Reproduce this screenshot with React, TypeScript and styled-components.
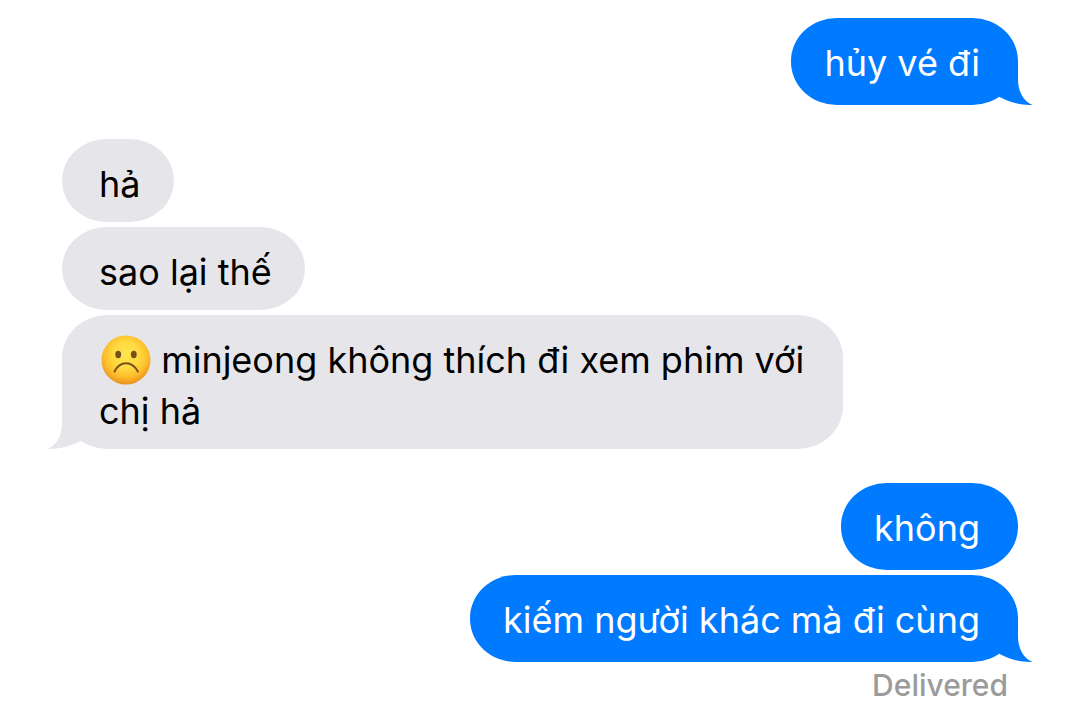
import React from "react";
import styled, { createGlobalStyle, css } from "styled-components";

const GlobalStyle = createGlobalStyle`
  *, *::before, *::after {
    box-sizing: border-box;
  }

  body {
    margin: 0;
    background: #ffffff;
    font-family: Inter, "Noto Sans", sans-serif;
  }
`;

type Side = "sent" | "received";

const Conversation = styled.main`
  display: flex;
  flex-direction: column;
  gap: 34px;
  padding: 18px 62px 24px;
`;

const Group = styled.section<{ $side: Side }>`
  display: flex;
  flex-direction: column;
  align-items: ${({ $side }) => ($side === "sent" ? "flex-end" : "flex-start")};
  gap: 5px;
`;

const sentBubble = css`
  padding: 20px 38px 16px 33px;
  background: #007aff;
  color: #ffffff;
`;

const receivedBubble = css`
  padding: 20px 33px 12px 37px;
  background: #e5e5ea;
  color: #000000;
`;

const Bubble = styled.p<{ $side: Side }>`
  position: relative;
  margin: 0;
  max-width: 81.7%;
  border-radius: 46px / 43px;
  font-size: 36px;
  line-height: 51px;
  ${({ $side }) => ($side === "sent" ? sentBubble : receivedBubble)}
`;

const TailShape = styled.svg<{ $side: Side }>`
  position: absolute;
  bottom: 0;
  ${({ $side }) =>
    $side === "sent"
      ? css`
          right: -16px;
          fill: #007aff;
        `
      : css`
          left: -16px;
          fill: #e5e5ea;
          transform: scaleX(-1);
        `}
`;

const EmojiImage = styled.svg`
  display: inline-block;
  margin-left: 2px;
  vertical-align: -12px;
`;

const Status = styled.span`
  padding-right: 10px;
  color: #9b9b9b;
  font-size: 30px;
  font-weight: 500;
  line-height: 36px;
`;

function Tail({ side }: { side: Side }) {
  return (
    <TailShape $side={side} width="44" height="45" viewBox="0 0 44 45" aria-hidden="true">
      <path d="M28 0V19C28 31 33 41 42.500 45C30 45.200 19 42 9.500 37L0 20V0Z" />
    </TailShape>
  );
}

function FrowningFace() {
  return (
    <EmojiImage width="50" height="50" viewBox="0 0 50 50" role="img" aria-label="frowning face">
      <defs>
        <radialGradient id="face" cx="50%" cy="40%" r="60%">
          <stop offset="0" stopColor="#ffe650" />
          <stop offset="0.45" stopColor="#ffd93f" />
          <stop offset="0.75" stopColor="#fdbd2c" />
          <stop offset="1" stopColor="#ea8f1c" />
        </radialGradient>
      </defs>
      <circle cx="25" cy="25" r="24.500" fill="url(#face)" />
      <ellipse cx="17.200" cy="19.500" rx="2.900" ry="3.700" fill="#75501a" />
      <ellipse cx="32.800" cy="19.500" rx="2.900" ry="3.700" fill="#75501a" />
      <path
        d="M13.500 36.500C19 25.500 31 25.500 36.800 36.500"
        fill="none"
        stroke="#75501a"
        strokeWidth="2"
        strokeLinecap="round"
      />
    </EmojiImage>
  );
}

interface MessageProps {
  side: Side;
  tail?: boolean;
  children: React.ReactNode;
}

function Message({ side, tail = false, children }: MessageProps) {
  return (
    <Bubble $side={side}>
      {tail && <Tail side={side} />}
      {children}
    </Bubble>
  );
}

export default function App() {
  return (
    <>
      <GlobalStyle />
      <Conversation lang="vi">
        <Group $side="sent">
          <Message side="sent" tail>hủy vé đi</Message>
        </Group>
        <Group $side="received">
          <Message side="received">hả</Message>
          <Message side="received">sao lại thế</Message>
          <Message side="received" tail>
            <FrowningFace /> minjeong không thích đi xem phim với chị hả
          </Message>
        </Group>
        <Group $side="sent">
          <Message side="sent">không</Message>
          <Message side="sent" tail>kiếm người khác mà đi cùng</Message>
          <Status>Delivered</Status>
        </Group>
      </Conversation>
    </>
  );
}
